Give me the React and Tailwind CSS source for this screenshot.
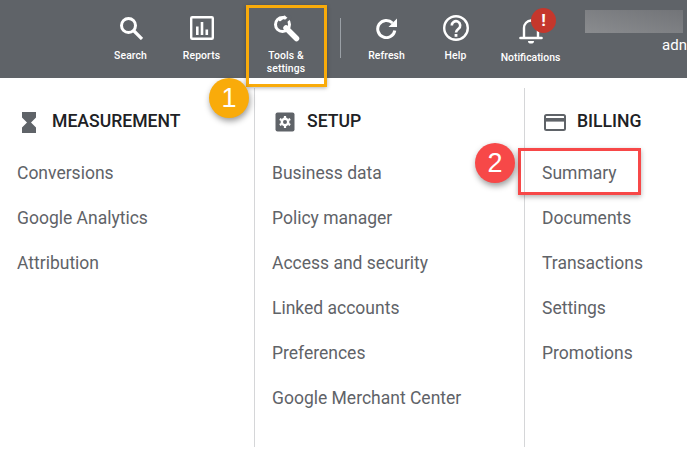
import { useState } from "react";

const navItems = [
  { label: ["Search"], width: "w-[71px]", icon: <SearchIcon /> },
  { label: ["Reports"], width: "w-[71px]", icon: <ReportsIcon /> },
  { label: ["Tools &", "settings"], width: "w-[98px]", icon: <ToolsIcon /> },
];

const navItemsRight = [
  { label: ["Refresh"], width: "w-[69px]", icon: <RefreshIcon /> },
  { label: ["Help"], width: "w-[69px]", icon: <HelpIcon /> },
];

const columns = [
  {
    title: "MEASUREMENT",
    icon: <HourglassIcon />,
    width: "w-[255px]",
    pad: "pl-[17px]",
    head: "pl-[22px] gap-[16px]",
    links: ["Conversions", "Google Analytics", "Attribution"],
  },
  {
    title: "SETUP",
    icon: <GearIcon />,
    width: "w-[270px]",
    pad: "pl-[17px]",
    head: "pl-[20px] gap-[12px]",
    links: [
      "Business data",
      "Policy manager",
      "Access and security",
      "Linked accounts",
      "Preferences",
      "Google Merchant Center",
    ],
  },
  {
    title: "BILLING",
    icon: <CardIcon />,
    width: "flex-1",
    pad: "pl-[17px]",
    head: "pl-[19px] gap-[11px]",
    links: ["Summary", "Documents", "Transactions", "Settings", "Promotions"],
  },
];

function SearchIcon() {
  return (
    <svg width="24" height="24" viewBox="0 0 24 24" fill="none" stroke="white">
      <circle cx="9.5" cy="9.5" r="7" strokeWidth="3" />
      <path d="M14.5 14.5 L23 23" strokeWidth="3.2" />
    </svg>
  );
}

function ReportsIcon() {
  return (
    <svg width="24" height="24" viewBox="0 0 24 24" fill="none">
      <rect x="1.2" y="1.2" width="21.6" height="21.6" stroke="white" strokeWidth="2.4" rx="1" />
      <rect x="6" y="10.5" width="2.6" height="8.5" fill="white" />
      <rect x="10.7" y="6" width="2.6" height="13" fill="white" />
      <rect x="15.5" y="13.5" width="2.6" height="5.5" fill="white" />
    </svg>
  );
}

function ToolsIcon() {
  return (
    <svg width="27" height="27" viewBox="0 0 27 27" fill="none">
      <path d="M13 13 L23.5 23.5" stroke="white" strokeWidth="5.5" strokeLinecap="round" />
      <circle cx="9.5" cy="9.5" r="7" stroke="white" strokeWidth="3" />
      <path d="M8.5 10 L12.5 6.5 L18 1.5" stroke="#5f6368" strokeWidth="3" />
      <path d="M7 5 L11.5 1.8" stroke="white" strokeWidth="2.4" strokeLinecap="round" />
    </svg>
  );
}

function RefreshIcon() {
  return (
    <svg width="22" height="21" viewBox="0 0 22 21" fill="none">
      <path d="M16.5 5 A8.6 8.6 0 1 0 18.8 12.5" stroke="white" strokeWidth="3" />
      <path d="M12.5 9 H21 V0.5 Z" fill="white" />
    </svg>
  );
}

function HelpIcon() {
  return (
    <svg width="28" height="28" viewBox="0 0 28 28" fill="none">
      <circle cx="14" cy="14" r="11.8" stroke="white" strokeWidth="2.4" />
      <path d="M9.8 11.5 A4.2 4.2 0 1 1 16.5 14.8 C15 16 14 16.5 14 18.5" stroke="white" strokeWidth="2.6" />
      <rect x="12.6" y="20" width="2.8" height="2.8" fill="white" />
    </svg>
  );
}

function BellIcon() {
  return (
    <svg width="24" height="34" viewBox="0 -6 24 34" fill="none">
      <path d="M5 20 V11 A7 7.5 0 0 1 19 11 V20" stroke="white" strokeWidth="2.4" />
      <path d="M1.5 21 H22.5" stroke="white" strokeWidth="2.6" strokeLinecap="round" />
      <path d="M9 24 H15 A3 2.6 0 0 1 9 24 Z" fill="white" />
    </svg>
  );
}

function HourglassIcon() {
  return (
    <svg width="14" height="21" viewBox="0 0 14 21" fill="#5f6368">
      <path d="M0 0 H14 V5.5 L9 10.5 L14 15.5 V21 H0 V15.5 L5 10.5 L0 5.5 Z" />
    </svg>
  );
}

function GearIcon() {
  return (
    <svg width="20" height="20" viewBox="0 0 20 20">
      <rect width="19" height="19" x="0.5" y="0.5" rx="2" fill="#5f6368" />
      <circle cx="10" cy="10" r="3.2" fill="none" stroke="white" strokeWidth="2.4" />
      <path
        d="M10 4 V6 M10 14 V16 M4.8 7 L6.5 8 M13.5 12 L15.2 13 M4.8 13 L6.5 12 M13.5 8 L15.2 7"
        stroke="white"
        strokeWidth="2.2"
      />
    </svg>
  );
}

function CardIcon() {
  return (
    <svg width="22" height="17" viewBox="0 0 22 17" fill="none">
      <rect x="1" y="1" width="20" height="15" rx="1.5" stroke="#5f6368" strokeWidth="2" />
      <rect x="1" y="4" width="20" height="3.6" fill="#5f6368" />
    </svg>
  );
}

function NavItem({ item }) {
  return (
    <div className={`${item.width} shrink-0 flex flex-col items-center pt-[13px]`}>
      <div className="flex h-[30px] items-center justify-center">{item.icon}</div>
      <div className="mt-[6px] text-center text-[10.4px] font-medium leading-[13px] tracking-[0.1px] text-white">
        {item.label.map((line) => (
          <div key={line}>{line}</div>
        ))}
      </div>
    </div>
  );
}

export default function App() {
  const [open] = useState(true);

  return (
    <div className="relative h-[454px] w-[687px] overflow-hidden bg-white font-['Roboto',sans-serif]">
      {/* TOP BAR */}
      <header className="flex h-[78px] bg-[#5f6368] pl-[95px]">
        {navItems.map((item) => (
          <NavItem key={item.label[0]} item={item} />
        ))}
        <div className="mx-[5px] mt-[18px] h-[40px] w-px shrink-0 bg-[#9aa0a6]" />
        <div className="w-[6px] shrink-0" />
        {navItemsRight.map((item) => (
          <NavItem key={item.label[0]} item={item} />
        ))}
        <div className="relative flex w-[81px] shrink-0 flex-col items-center pt-[13px]">
          <div className="flex h-[30px] items-center justify-center">
            <BellIcon />
          </div>
          <div className="mt-[8px] text-[10.4px] font-medium leading-[13px] text-white">
            Notifications
          </div>
          <div className="absolute left-[41px] top-[8px] flex h-[25px] w-[25px] items-center justify-center rounded-full bg-[#c5372c] text-[17px] font-bold text-white">
            !
          </div>
        </div>
        <div className="ml-[14px] flex flex-1 flex-col items-end overflow-hidden pt-[10px]">
          <div className="mr-[4px] h-[23px] w-[98px] bg-linear-to-tr from-[#8a8c8f] to-[#727478]" />
          <div className="mt-[2px] text-[15px] leading-[20px] text-white">adn</div>
        </div>
      </header>

      {/* MENU COLUMNS */}
      <main className="flex h-[369px] pt-[10px]">
        {open &&
          columns.map((col, i) => (
            <section
              key={col.title}
              className={`${col.width} pt-[13px] ${i < 2 ? "border-r border-[#d5d6d8]" : ""} ${
                i === 2 ? "" : "shrink-0"
              }`}
            >
              <div className={`flex h-[42px] items-center ${col.head}`}>
                {col.icon}
                <h2 className="text-[17.6px] font-medium leading-none text-[#202124]">{col.title}</h2>
              </div>
              <ul className={`mt-[8px] ${col.pad}`}>
                {col.links.map((link) => (
                  <li key={link} className="h-[45px] text-[17.5px] leading-[45px] text-[#5f6368]">
                    {link}
                  </li>
                ))}
              </ul>
            </section>
          ))}
      </main>

      {/* ANNOTATIONS */}
      <div className="absolute left-[246px] top-[5px] h-[82px] w-[81px] border-[3px] border-[#f9ab0a] shadow-[0_1px_4px_rgba(0,0,0,0.3)]" />
      <div className="absolute left-[209px] top-[78px] flex h-[40px] w-[40px] items-center justify-center rounded-full bg-[#f9ab0a] font-['Liberation_Sans',sans-serif] text-[27px] text-white shadow-[1px_3px_6px_rgba(0,0,0,0.4)]">
        1
      </div>
      <div className="absolute left-[518px] top-[148px] h-[47px] w-[123px] border-[3px] border-[#f74848] shadow-[0_2px_5px_rgba(0,0,0,0.3)]" />
      <div className="absolute left-[475px] top-[143px] flex h-[40px] w-[40px] items-center justify-center rounded-full bg-[#f74848] font-['Liberation_Sans',sans-serif] text-[27px] text-white shadow-[1px_3px_6px_rgba(0,0,0,0.4)]">
        2
      </div>
    </div>
  );
}
